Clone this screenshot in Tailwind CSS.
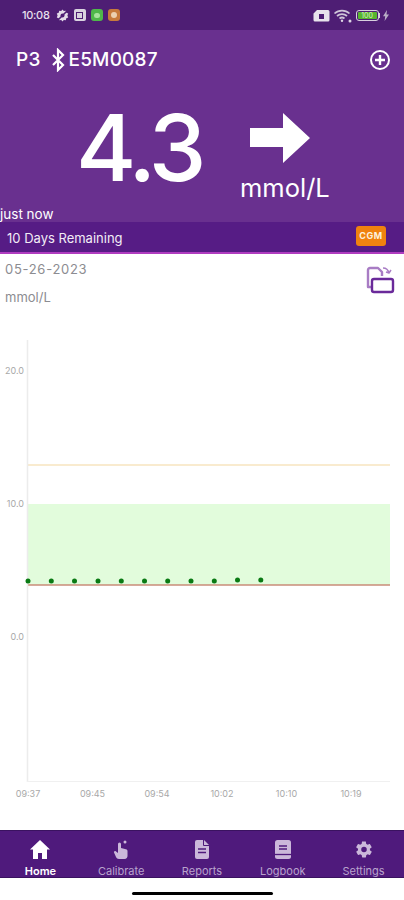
<!DOCTYPE html>
<html lang="en">
<head>
    <meta charset="UTF-8">
    <meta name="viewport" content="width=device-width, initial-scale=1.0">
    <title>CGM Home</title>
    <script src="https://cdn.jsdelivr.net/npm/@tailwindcss/browser@4"></script>
</head>
<body class="bg-white font-['Lato','Liberation_Sans',sans-serif]">
<div class="w-[404px] h-[900px] flex flex-col overflow-hidden relative">

    <!-- status bar -->
    <div class="h-[30px] bg-[#4e1e74] flex items-center justify-between pl-[22px] pr-[15px] text-[#e8e0ee]">
        <div class="flex items-center gap-[4px]">
            <span class="text-[11px] font-['Inter'] font-medium tracking-[-0.3px] mr-[1px]">10:08</span>
            <svg class="w-[15px] h-[15px]" viewBox="0 0 15 15" fill="#e3dbe9"><path d="M7.5 1.5l1.3 1.6 2-.3.5 2 1.9.8-.8 1.9.8 1.9-1.9.8-.5 2-2-.3-1.3 1.6-1.3-1.6-2 .3-.5-2-1.9-.8.8-1.9-.8-1.9 1.9-.8.5-2 2 .3z"/><circle cx="7.5" cy="7.5" r="2" fill="#4e1e74"/><path d="M2 13L13 2" stroke="#4e1e74" stroke-width="1.6"/></svg>
            <div class="w-[12px] h-[12px] rounded-[2px] bg-[#d9d3df] flex items-center justify-center"><div class="w-[7px] h-[7px] border border-[#4e1e74]"></div></div>
            <div class="w-[12px] h-[12px] rounded-[3px] bg-[#4fb84a] ml-[1px] flex items-center justify-center"><div class="w-[6px] h-[5px] rounded-full bg-[#a6e39c]"></div></div>
            <div class="w-[12px] h-[12px] rounded-[3px] bg-[#c77a3c] ml-[1px] flex items-center justify-center"><div class="w-[6px] h-[6px] rounded-full bg-[#ecd0b0]"></div></div>
        </div>
        <div class="flex items-center gap-[3px]">
            <svg class="w-[17px] h-[13px]" viewBox="0 0 17 13"><path d="M4 1h11a1.5 1.5 0 0 1 1.500 1.500V11a1.500 1.500 0 0 1-1.500 1.500H2A1.500 1.500 0 0 1 .5 11V4.500z" fill="#e8e3ec"/><rect x="6" y="5" width="5" height="5" fill="#4e1e74"/></svg>
            <svg class="w-[19px] h-[15px]" viewBox="0 0 19 15" fill="none" stroke="#cfc5d8" stroke-width="1.700"><path d="M1.500 5.500a11 11 0 0 1 15 0M4 8a7.500 7.500 0 0 1 10 0M6.500 10.500a4 4 0 0 1 5 0"/><circle cx="9" cy="12.800" r="1.200" fill="#ddd5e4" stroke="none"/><circle cx="17" cy="13" r="1.500" fill="#ddd5e4" stroke="none"/></svg>
            <div class="flex items-center ml-[1px]">
                <div class="w-[23px] h-[11px] rounded-[3px] border border-[#d8d0df] p-[1px] flex"><div class="flex-1 bg-[#58b52e] rounded-[1px] flex items-center justify-center text-[7px] leading-none text-[#d7f0c4] font-['Inter']">100</div></div>
                <div class="w-[1.500px] h-[5px] bg-[#d8d0df]"></div>
            </div>
            <svg class="w-[6px] h-[11px]" viewBox="0 0 6 11" fill="#b9aec6"><path d="M4 0L0 6.300h2.200L1.600 11 6 4.500H3.500z"/></svg>
        </div>
    </div>

    <!-- header -->
    <div class="h-[192px] bg-[#69308f] text-white flex flex-col relative">
        <div class="h-[60px] flex items-center justify-between pl-[16px] pr-[13px]">
            <div class="flex items-center text-[19px] font-['Inter'] font-medium tracking-[0.2px]">
                <span>P3</span>
                <svg class="w-[14px] h-[24px] ml-[10px] mr-[4px]" viewBox="0 0 14 24" fill="none" stroke="white" stroke-width="2.200"><path d="M2 7l10 10-5 5V2l5 5L2 17"/></svg>
                <span>E5M0087</span>
            </div>
            <svg class="w-[22px] h-[22px]" viewBox="0 0 22 22" fill="none" stroke="white"><circle cx="11" cy="11" r="9" stroke-width="2"/><path d="M11 6v10M6 11h10" stroke-width="2.400"/></svg>
        </div>
        <div class="flex items-start pl-[76px]">
            <span class="text-[92px] leading-[92px] font-['Inter'] font-medium tracking-[-5px] mt-[12px] w-[164px]">4.3</span>
            <div class="flex flex-col items-start mt-[23px] w-[92px]">
                <svg class="w-[60px] h-[50px] ml-[10px]" viewBox="0 0 60 50" fill="white"><path d="M0 15h33V0l27 25-27 25V34H0z"/></svg>
                <span class="text-[25.500px] leading-[26px] font-['Inter'] mt-[12px]">mmol/L</span>
            </div>
        </div>
        <span class="absolute left-0 bottom-[-1px] text-[13.500px] leading-[18px] font-['Inter']">just now</span>
    </div>

    <!-- sensor band -->
    <div class="h-[32px] bg-[#561c85] border-b-2 border-[#b03cc0] flex items-center justify-between pl-[7px] pr-[18px] text-[#f2ecf6]">
        <span class="text-[13px] font-['Inter'] mt-[3px]">10 Days Remaining</span>
        <span class="w-[30px] h-[20px] rounded-[3px] bg-[#f0820f] text-[9px] font-bold font-['Inter'] text-[#fdf1df] flex items-center justify-center tracking-[0.5px] mb-[2px]">CGM</span>
    </div>

    <!-- date row -->
    <div class="h-[66px] relative text-[#8c8c91] font-['Inter'] text-[13px] px-[5px] pt-[6px]">
        <p class="leading-[18px] tracking-[0.7px]">05-26-2023</p>
        <p class="leading-[18px] mt-[10px]">mmol/L</p>
        <svg class="absolute right-[9px] top-[11px] w-[30px] h-[30px]" viewBox="0 0 30 30" fill="none" stroke-linejoin="round">
            <path d="M7 22H3V5a2 2 0 0 1 2-2h8l4 4v4" stroke="#a87cc4" stroke-width="2.400"/>
            <path d="M18 3c3 0 5 1 6 5M26 5l-2 3-3-1" stroke="#a87cc4" stroke-width="1.500"/>
            <rect x="7" y="14" width="21" height="13" rx="2" stroke="#6a2a9a" stroke-width="2.400"/>
        </svg>
    </div>

    <!-- chart -->
    <svg class="w-[404px] h-[510px] block" viewBox="0 320 404 510" font-family="Inter, sans-serif" font-size="9" fill="#a8a8a8">
        <rect x="28" y="504" width="362" height="81" fill="#e2fcdc"/>
        <line x1="28" y1="465" x2="390" y2="465" stroke="#f9ebcf" stroke-width="2"/>
        <line x1="28" y1="585" x2="390" y2="585" stroke="#c98c78" stroke-width="1.500"/>
        <line x1="27.500" y1="340" x2="27.500" y2="782" stroke="#ececec" stroke-width="1.500"/>
        <line x1="27" y1="781.500" x2="390" y2="781.500" stroke="#f0f0f0" stroke-width="1"/>
        <text x="24" y="374" text-anchor="end">20.0</text>
        <text x="24" y="507" text-anchor="end">10.0</text>
        <text x="24" y="640" text-anchor="end">0.0</text>
        <g fill="#0a7a14">
            <circle cx="28" cy="581" r="2.500"/><circle cx="51.300" cy="581" r="2.500"/><circle cx="74.500" cy="581" r="2.500"/>
            <circle cx="98" cy="581" r="2.500"/><circle cx="121.300" cy="581" r="2.500"/><circle cx="144.500" cy="581" r="2.500"/>
            <circle cx="167.700" cy="581" r="2.500"/><circle cx="191" cy="581" r="2.500"/><circle cx="214.300" cy="581" r="2.500"/>
            <circle cx="237.500" cy="580" r="2.500"/><circle cx="260.800" cy="580" r="2.500"/>
        </g>
        <g text-anchor="middle">
            <text x="28" y="797">09:37</text><text x="92.500" y="797">09:45</text><text x="157" y="797">09:54</text>
            <text x="222" y="797">10:02</text><text x="286.500" y="797">10:10</text><text x="351" y="797">10:19</text>
        </g>
    </svg>

    <!-- bottom nav -->
    <div class="h-[48px] bg-[#4f1a7c] border-y border-[#3a1260] grid grid-cols-5 text-[#b9a3cc] font-['Inter'] text-[11px] leading-[14px] text-center">
        <div class="flex flex-col items-center pt-[9px] text-white font-semibold">
            <svg class="w-[20px] h-[19px]" viewBox="0 0 20 19" fill="white"><path d="M10 0L0 9.500h3V19h5v-6h4v6h5V9.500h3z"/></svg>
            <span class="mt-[5px]">Home</span>
        </div>
        <div class="flex flex-col items-center pt-[9px]">
            <svg class="w-[20px] h-[19px]" viewBox="0 0 20 19" fill="#cbb8da"><circle cx="14" cy="2" r="1.500"/><path d="M7 4a1.500 1.500 0 0 1 3 0v4l5 1.200c1 .3 1.500 1 1.500 2V16c0 1.500-1 3-3 3H8c-1.500 0-2.500-1-3-2l-2-4.500c-.4-1 .8-2 1.700-1.300L7 13z"/></svg>
            <span class="mt-[5px]">Calibrate</span>
        </div>
        <div class="flex flex-col items-center pt-[9px]">
            <svg class="w-[20px] h-[19px]" viewBox="0 0 20 19" fill="#cbb8da"><path d="M3 2a2 2 0 0 1 2-2h7l5 5v12a2 2 0 0 1-2 2H5a2 2 0 0 1-2-2z"/><path d="M6 9h8M6 12.500h8" stroke="#4f1a7c" stroke-width="1.500"/><path d="M11.500 0v5.500H17" fill="none" stroke="#4f1a7c" stroke-width="1"/></svg>
            <span class="mt-[5px]">Reports</span>
        </div>
        <div class="flex flex-col items-center pt-[9px]">
            <svg class="w-[20px] h-[19px]" viewBox="0 0 20 19" fill="#cbb8da"><rect x="2" y="0" width="16" height="19" rx="2.500"/><path d="M6 6h8M6 9h8" stroke="#4f1a7c" stroke-width="1.300"/><path d="M2 14.500h16" stroke="#4f1a7c" stroke-width="1.300"/></svg>
            <span class="mt-[5px]">Logbook</span>
        </div>
        <div class="flex flex-col items-center pt-[9px]">
            <svg class="w-[20px] h-[19px]" viewBox="0 0 24 24" fill="#cbb8da"><path d="M19.400 13c.1-.3.100-.7.100-1s0-.7-.1-1l2.100-1.600c.2-.2.200-.4.100-.6l-2-3.500c-.1-.2-.4-.3-.6-.2l-2.500 1c-.5-.4-1.100-.7-1.700-1l-.4-2.600c0-.3-.2-.5-.5-.5h-4c-.2 0-.5.200-.5.500l-.4 2.600c-.6.300-1.200.6-1.700 1l-2.500-1c-.2-.1-.5 0-.6.200l-2 3.500c-.1.200-.1.500.1.600L4.500 11c0 .3-.1.700-.1 1s0 .7.100 1l-2.100 1.600c-.2.200-.2.400-.1.600l2 3.500c.1.200.4.300.6.200l2.500-1c.5.400 1.100.7 1.700 1l.4 2.600c0 .3.300.5.500.5h4c.3 0 .5-.2.500-.5l.4-2.600c.6-.3 1.200-.6 1.700-1l2.500 1c.2.100.5 0 .6-.2l2-3.500c.1-.2.100-.5-.1-.6zM12 15.500a3.500 3.500 0 1 1 0-7 3.500 3.500 0 0 1 0 7z"/></svg>
            <span class="mt-[5px]">Settings</span>
        </div>
    </div>

    <!-- home indicator -->
    <div class="flex-1 flex justify-center pt-[14px]">
        <div class="w-[141px] h-[3px] rounded-full bg-black"></div>
    </div>
</div>
</body>
</html>
